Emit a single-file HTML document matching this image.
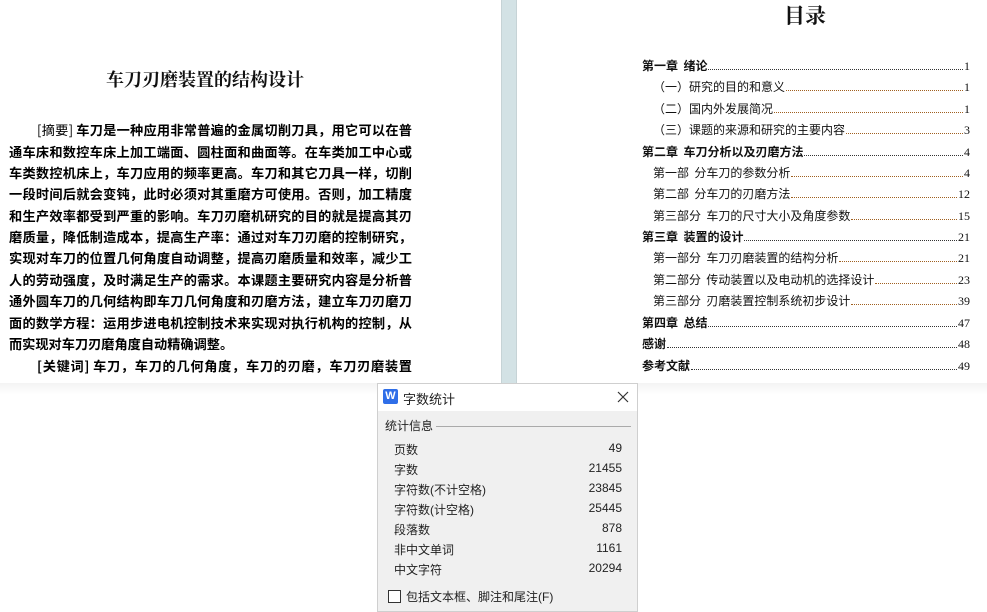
<!DOCTYPE html>
<html><head><meta charset="utf-8"><style>
body{margin:0;width:987px;height:612px;overflow:hidden;background:#fff;position:relative;font-family:"Liberation Serif","Noto Serif CJK SC",serif;}
.div{position:absolute;left:501px;top:0;width:14px;height:383px;background:#d3e2e5;border-left:1px solid #c6d3d6;border-right:1px solid #c6d3d6;}
.bot{position:absolute;left:0;top:383px;width:987px;height:229px;background:linear-gradient(#f3f3f3,#fff 12px);}
.title{position:absolute;left:0;width:410px;top:66px;text-align:center;font-size:18px;font-weight:bold;color:#111;}
.p{position:absolute;left:9px;width:403px;font-size:13.2px;font-weight:bold;color:#000;text-align:justify;text-align-last:justify;white-space:nowrap;font-family:"Noto Sans CJK SC",sans-serif;line-height:16px;}
.toch{position:absolute;left:760px;width:90px;top:0px;text-align:center;font-size:21px;font-weight:bold;color:#111;font-family:"Noto Serif CJK SC",serif;}
.r{position:absolute;left:642px;width:328px;height:16px;font-size:12px;display:flex;align-items:flex-end;font-family:"Noto Sans CJK SC",sans-serif;color:#111;line-height:14px;}
.r .t{white-space:nowrap}
.r .d{flex:1;border-bottom:1px dotted #333;margin:0 1px 3px 1px;}
.r .n{font-family:"Liberation Serif",serif;font-size:12px;font-weight:normal}
.b{font-weight:bold}
.s .t{padding-left:11px}
.s .d{border-bottom-color:#a06020}
.dlg{position:absolute;left:377px;top:383px;width:261px;height:229px;background:#f0f0f0;border:1px solid #cfcfcf;box-sizing:border-box;font-family:"Liberation Sans","Noto Sans CJK SC",sans-serif;font-size:12px;color:#222;}
.tb{height:27px;background:#fff;position:relative;}
.w{position:absolute;left:5px;top:5px;width:15px;height:15px;background:#2f6ee8;border-radius:2px;color:#fff;font-size:11px;font-weight:bold;text-align:center;line-height:15px;}
.row{position:absolute;left:16px;width:228px;display:flex;justify-content:space-between;}
</style></head><body>
<div class="div"></div>
<div class="bot"></div>
<div class="title">车刀刃磨装置的结构设计</div>
<div class="p" style="top:122px;padding-left:28px;width:375px"><span style="font-weight:normal">[摘要]</span> 车刀是一种应用非常普遍的金属切削刀具，用它可以在普</div>
<div class="p" style="top:144px">通车床和数控车床上加工端面、圆柱面和曲面等。在车类加工中心或</div>
<div class="p" style="top:165px">车类数控机床上，车刀应用的频率更高。车刀和其它刀具一样，切削</div>
<div class="p" style="top:186px">一段时间后就会变钝，此时必须对其重磨方可使用。否则，加工精度</div>
<div class="p" style="top:208px">和生产效率都受到严重的影响。车刀刃磨机研究的目的就是提高其刃</div>
<div class="p" style="top:229px">磨质量，降低制造成本，提高生产率：通过对车刀刃磨的控制研究，</div>
<div class="p" style="top:250px">实现对车刀的位置几何角度自动调整，提高刃磨质量和效率，减少工</div>
<div class="p" style="top:272px">人的劳动强度，及时满足生产的需求。本课题主要研究内容是分析普</div>
<div class="p" style="top:293px">通外圆车刀的几何结构即车刀几何角度和刃磨方法，建立车刀刃磨刀</div>
<div class="p" style="top:315px">面的数学方程：运用步进电机控制技术来实现对执行机构的控制，从</div>
<div class="p" style="top:336px;text-align-last:left">而实现对车刀刃磨角度自动精确调整。</div>
<div class="p" style="top:358px;padding-left:28px;width:375px">[关键词] 车刀，车刀的几何角度，车刀的刃磨，车刀刃磨装置</div>

<div class="toch">目录</div>
<div class="r b" style="top:57px"><span class="t">第一章&nbsp; 绪论</span><span class="d"></span><span class="n">1</span></div>
<div class="r s" style="top:78px"><span class="t">（一）研究的目的和意义</span><span class="d"></span><span class="n">1</span></div>
<div class="r s" style="top:100px"><span class="t">（二）国内外发展简况</span><span class="d"></span><span class="n">1</span></div>
<div class="r s" style="top:121px"><span class="t">（三）课题的来源和研究的主要内容</span><span class="d"></span><span class="n">3</span></div>
<div class="r b" style="top:143px"><span class="t">第二章&nbsp; 车刀分析以及刃磨方法</span><span class="d"></span><span class="n">4</span></div>
<div class="r s" style="top:164px"><span class="t">第一部&nbsp; 分车刀的参数分析</span><span class="d"></span><span class="n">4</span></div>
<div class="r s" style="top:185px"><span class="t">第二部&nbsp; 分车刀的刃磨方法</span><span class="d"></span><span class="n">12</span></div>
<div class="r s" style="top:207px"><span class="t">第三部分&nbsp; 车刀的尺寸大小及角度参数</span><span class="d"></span><span class="n">15</span></div>
<div class="r b" style="top:228px"><span class="t">第三章&nbsp; 装置的设计</span><span class="d"></span><span class="n">21</span></div>
<div class="r s" style="top:249px"><span class="t">第一部分&nbsp; 车刀刃磨装置的结构分析</span><span class="d"></span><span class="n">21</span></div>
<div class="r s" style="top:271px"><span class="t">第二部分&nbsp; 传动装置以及电动机的选择设计</span><span class="d"></span><span class="n">23</span></div>
<div class="r s" style="top:292px"><span class="t">第三部分&nbsp; 刃磨装置控制系统初步设计</span><span class="d"></span><span class="n">39</span></div>
<div class="r b" style="top:314px"><span class="t">第四章&nbsp; 总结</span><span class="d"></span><span class="n">47</span></div>
<div class="r b" style="top:335px"><span class="t">感谢</span><span class="d"></span><span class="n">48</span></div>
<div class="r b" style="top:357px"><span class="t">参考文献</span><span class="d"></span><span class="n">49</span></div>

<div class="dlg">
<div class="tb"><div class="w">W</div><span style="position:absolute;left:25px;top:5px;font-size:13px">字数统计</span>
<svg style="position:absolute;left:239px;top:7px" width="12" height="12"><path d="M1 1L11 11M11 1L1 11" stroke="#333" stroke-width="1.2"/></svg></div>
<div style="position:absolute;left:7px;top:33px">统计信息</div>
<div style="position:absolute;left:58px;top:42px;width:195px;border-top:1px solid #aaa"></div>
<div class="row" style="top:57px"><span>页数</span><span>49</span></div>
<div class="row" style="top:77px"><span>字数</span><span>21455</span></div>
<div class="row" style="top:97px"><span>字符数(不计空格)</span><span>23845</span></div>
<div class="row" style="top:117px"><span>字符数(计空格)</span><span>25445</span></div>
<div class="row" style="top:137px"><span>段落数</span><span>878</span></div>
<div class="row" style="top:157px"><span>非中文单词</span><span>1161</span></div>
<div class="row" style="top:177px"><span>中文字符</span><span>20294</span></div>
<div style="position:absolute;left:10px;top:206px;width:11px;height:11px;border:1px solid #333;background:#fff"></div>
<div style="position:absolute;left:28px;top:204px">包括文本框、脚注和尾注(F)</div>
</div>
</body></html>
